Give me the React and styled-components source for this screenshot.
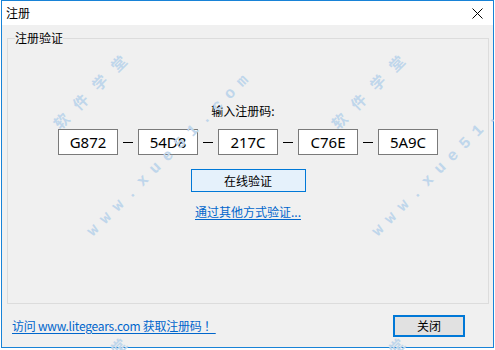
import React from 'react';
import styled, { createGlobalStyle } from 'styled-components';

const GlobalStyle = createGlobalStyle`
    body {
        margin: 0;
        background: #fff;
        font-family: "Noto Sans CJK SC", "Noto Sans", sans-serif;
        font-size: 12px;
        color: #000;
    }
`;

const linkColor = '#0066cc';
const accent = '#0078d7';

const Page = styled.div`
    position: relative;
    width: 495px;
    height: 350px;
    overflow: hidden;
`;

const Window = styled.div`
    margin-left: 1px;
    width: 493px;
    height: 348px;
    box-sizing: border-box;
    border: 1px solid #1883d7;
    display: flex;
    flex-direction: column;
`;

const TitleBar = styled.div`
    height: 24px;
    flex: none;
    background: #fff;
    display: flex;
    align-items: center;
    justify-content: space-between;
    padding: 0 10px 0 4px;
    line-height: 16px;
`;

const Body = styled.div`
    flex: 1;
    background: #f0f0f0;
    display: flex;
    flex-direction: column;
    padding: 5px 4px 0 5px;
`;

const Group = styled.fieldset`
    margin: 0;
    padding: 0;
    min-width: 0;
    height: 274px;
    box-sizing: border-box;
    border: 1px solid #dcdcdc;
`;

const Legend = styled.legend`
    margin-left: 7px;
    padding: 0;
    line-height: 16px;
`;

const Content = styled.div`
    display: flex;
    flex-direction: column;
    align-items: center;
    padding-top: 57px;
    line-height: 16px;
`;

const Label = styled.div`
    margin-right: 10px;
`;

const CodeRow = styled.div`
    display: flex;
    align-items: center;
    margin-top: 10px;
`;

const CodeBox = styled.div`
    width: 60px;
    height: 26px;
    box-sizing: border-box;
    border: 1px solid #7a7a7a;
    background: #fff;
    display: flex;
    align-items: center;
    justify-content: center;
    font-family: "Noto Sans", sans-serif;
    font-size: 15px;
`;

const Dash = styled.span`
    width: 20px;
    display: flex;
    justify-content: center;

    &::before {
        content: "";
        width: 10px;
        height: 1px;
        background: #000;
    }
`;

const Button = styled.button`
    font: inherit;
    font-size: 12px;
    line-height: 16px;
    color: #000;
    box-sizing: border-box;
    width: ${p => p.$w}px;
    height: ${p => p.$h}px;
    border: ${p => p.$border}px solid ${accent};
    background: ${p => p.$bg};
    padding: 0;
    cursor: default;
`;

const Link = styled.a`
    color: ${linkColor};
    text-decoration: underline;
    text-underline-offset: 2px;
    cursor: pointer;
    margin-top: ${p => p.$top || 0}px;
    letter-spacing: ${p => p.$tight ? -0.25 : 0}px;
`;

const Footer = styled.div`
    flex: 1;
    display: flex;
    align-items: center;
    justify-content: space-between;
    padding: 1px 24px 0 5px;
    line-height: 16px;
`;

// faint "软件学堂" watermark laid over the shot
const Watermark = styled.span`
    position: absolute;
    pointer-events: none;
    white-space: nowrap;
    transform-origin: 0 50%;
    transform: rotate(-45deg);
    color: #bfd6eb;
    font-weight: bold;
    font-family: ${p => p.$mono ? '"Liberation Mono", monospace' : '"Noto Sans CJK SC", sans-serif'};
    font-size: ${p => p.$mono ? 16 : 15}px;
    line-height: 16px;
    letter-spacing: ${p => p.$mono ? 8 : 12}px;
`;

const CODES = ['G872', '54D8', '217C', 'C76E', '5A9C'];

const MARKS = [
    { text: '软件学堂', x: 56, y: 118 },
    { text: '软件学堂', x: 334, y: 118 },
    { text: '软件学堂', x: 56, y: 401 },
    { text: '软件学堂', x: 334, y: 401 },
    { text: 'www.xue51.com', x: 90, y: 226, mono: true },
    { text: 'www.xue51.com', x: 375, y: 226, mono: true },
];

const CloseIcon = () => (
    <svg width="11" height="11" viewBox="0 0 11 11">
        <path d="M0.5 0.5 L10.5 10.5 M10.5 0.5 L0.5 10.5" stroke="#000" strokeWidth="1" fill="none" />
    </svg>
);

const App = () => {
    return (
        <Page>
            <GlobalStyle />
            <Window>
                <TitleBar>
                    <span>注册</span>
                    <CloseIcon />
                </TitleBar>
                <Body>
                    <Group>
                        <Legend>注册验证</Legend>
                        <Content>
                            <Label>输入注册码:</Label>
                            <CodeRow>
                                {CODES.map((c, i) => (
                                    <React.Fragment key={c}>
                                        {i > 0 && <Dash />}
                                        <CodeBox>{c}</CodeBox>
                                    </React.Fragment>
                                ))}
                            </CodeRow>
                            <Button $w={115} $h={23} $border={1} $bg="#e5f1fb" style={{ marginTop: 14 }}>在线验证</Button>
                            <Link $top={12}>通过其他方式验证...</Link>
                        </Content>
                    </Group>
                    <Footer>
                        <Link $tight>访问 www.litegears.com 获取注册码 ！</Link>
                        <Button $w={72} $h={22} $border={2} $bg="#e1e1e1">关闭</Button>
                    </Footer>
                </Body>
            </Window>
            {MARKS.map((m, i) => (
                <Watermark key={i} $mono={m.mono} style={{ left: m.x, top: m.y }}>{m.text}</Watermark>
            ))}
        </Page>
    );
};

export default App;
